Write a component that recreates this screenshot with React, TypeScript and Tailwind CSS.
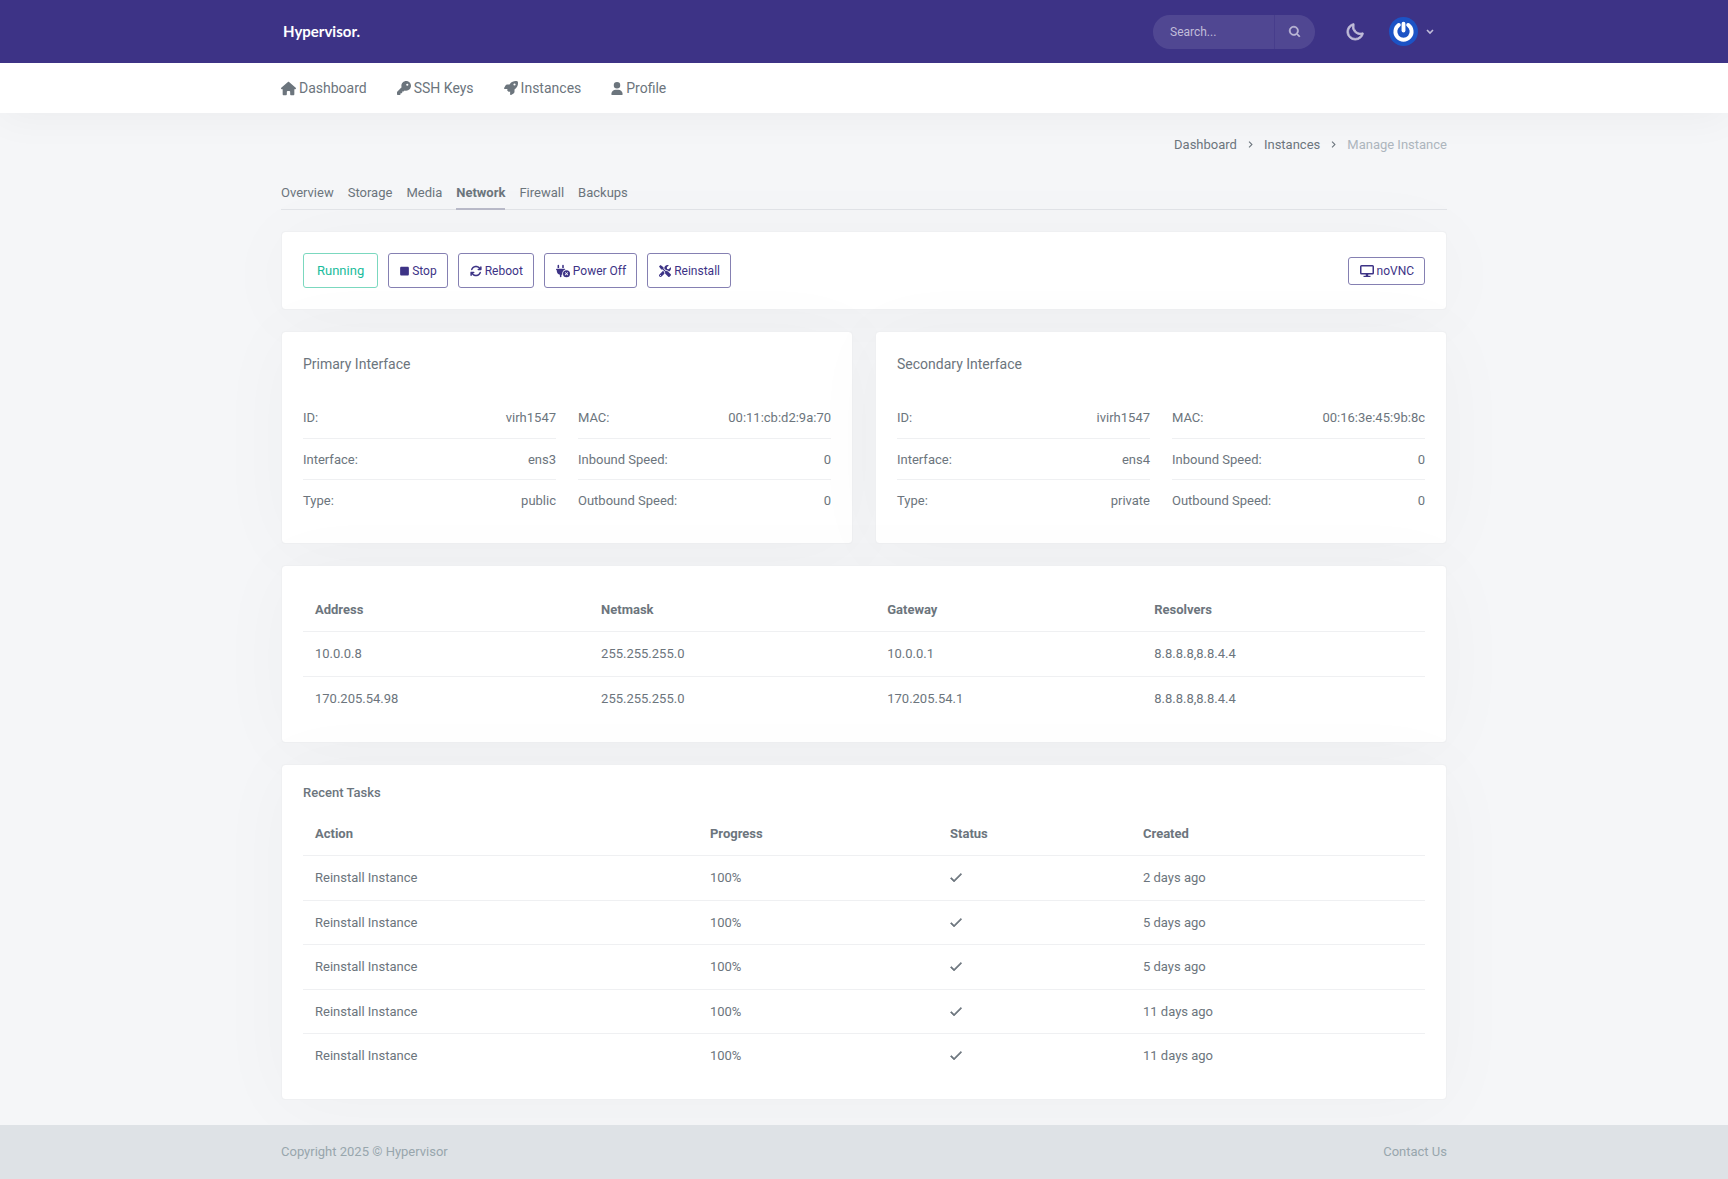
import type { ReactNode } from 'react'
import { BiMoon, BiSearch } from 'react-icons/bi'
import { FaArrowsRotate, FaHouse, FaKey, FaPlugCircleXmark, FaRocket, FaSquare, FaUser } from 'react-icons/fa6'
import { FaTools } from 'react-icons/fa'
import { MdChevronRight } from 'react-icons/md'

interface InterfaceInfo {
  title: string
  left: [string, string][]
  right: [string, string][]
}

const navItems = [
  { label: 'Dashboard', icon: <FaHouse className="size-[15px]" /> },
  { label: 'SSH Keys', icon: <FaKey className="size-[14px]" /> },
  { label: 'Instances', icon: <FaRocket className="size-[14px]" /> },
  { label: 'Profile', icon: <FaUser className="h-[13px] w-3" /> },
]

const tabs = ['Overview', 'Storage', 'Media', 'Network', 'Firewall', 'Backups']

const interfaces: InterfaceInfo[] = [
  {
    title: 'Primary Interface',
    left: [['ID:', 'virh1547'], ['Interface:', 'ens3'], ['Type:', 'public']],
    right: [['MAC:', '00:11:cb:d2:9a:70'], ['Inbound Speed:', '0'], ['Outbound Speed:', '0']],
  },
  {
    title: 'Secondary Interface',
    left: [['ID:', 'ivirh1547'], ['Interface:', 'ens4'], ['Type:', 'private']],
    right: [['MAC:', '00:16:3e:45:9b:8c'], ['Inbound Speed:', '0'], ['Outbound Speed:', '0']],
  },
]

const addresses = [
  ['10.0.0.8', '255.255.255.0', '10.0.0.1', '8.8.8.8,8.8.4.4'],
  ['170.205.54.98', '255.255.255.0', '170.205.54.1', '8.8.8.8,8.8.4.4'],
]

const tasks = ['2 days ago', '5 days ago', '5 days ago', '11 days ago', '11 days ago']

function Container({ children, className = '' }: { children: ReactNode; className?: string }) {
  return <div className={`mx-auto w-full max-w-[1190px] px-3 ${className}`}>{children}</div>
}

function Card({ children, className = '' }: { children: ReactNode; className?: string }) {
  return (
    <section className={`rounded border border-[#eff0f2] bg-white bg-clip-padding shadow-[0_5px_80px_0_rgba(3,2,8,0.03)] ${className}`}>
      {children}
    </section>
  )
}

function ActionButton({ icon, label, className = 'h-[35px] pr-[10px] pl-[11px]' }: { icon: ReactNode; label: string; className?: string }) {
  return (
    <button type="button" className={`flex items-center gap-[3px] rounded-[3px] border border-[#8580b2] text-xs text-[#3d3386] hover:bg-[#3d3386]/10 ${className}`}>
      {icon}
      {label}
    </button>
  )
}

function CheckIcon() {
  return (
    <svg viewBox="3 5 18 14" className="h-[9px] w-3" fill="currentColor" stroke="currentColor" strokeWidth={1} role="img" aria-label="Complete">
      <path d="M9 16.17 4.83 12l-1.42 1.41L9 19 21 7l-1.41-1.41z" />
    </svg>
  )
}

function DisplayIcon() {
  return (
    <svg viewBox="0 0 14 12" className="h-3 w-[14px]" fill="none" stroke="currentColor" aria-hidden>
      <rect x="0.75" y="0.75" width="12.5" height="8" rx="0.8" strokeWidth="1.5" />
      <path d="M7 9v2" strokeWidth="2.5" />
      <path d="M3.5 11.4h7" strokeWidth="1.2" />
    </svg>
  )
}

function InfoList({ rows }: { rows: [string, string][] }) {
  return (
    <dl className="flex-1 divide-y divide-[#eff0f2]">
      {rows.map(([name, value]) => (
        <div key={name} className="flex justify-between pt-[11px] pb-[10px]">
          <dt>{name}</dt>
          <dd>{value}</dd>
        </div>
      ))}
    </dl>
  )
}

function DataTable({ columns, rows }: { columns: { label: string; width: string }[]; rows: ReactNode[][] }) {
  return (
    <table className="w-full table-fixed text-left">
      <thead>
        <tr className="border-b border-[#eff0f2]">
          {columns.map((column) => (
            <th key={column.label} scope="col" className={`p-3 font-bold ${column.width}`}>{column.label}</th>
          ))}
        </tr>
      </thead>
      <tbody className="divide-y divide-[#eff0f2]">
        {rows.map((row, i) => (
          <tr key={i}>
            {row.map((cell, j) => (
              <td key={j} className="p-3">{cell}</td>
            ))}
          </tr>
        ))}
      </tbody>
    </table>
  )
}

export default function App() {
  return (
    <div className="flex min-h-screen flex-col bg-[#f5f6f8] font-[Roboto,sans-serif] text-[13px] leading-normal text-[#6c757d]">
      <header className="relative z-10 bg-[#3d3386]">
        <Container className="flex h-[63px] items-center justify-between">
          <a href="#" className="pl-[2px] font-[Lato,sans-serif] text-[15px] font-bold text-white">Hypervisor.</a>
          <div className="flex items-center pr-[10px]">
            <form role="search" className="flex h-[34px] w-[162px] overflow-hidden rounded-full bg-white/10 text-[#c1bdd9]">
              <input
                type="search"
                aria-label="Search"
                placeholder="Search..."
                className="min-w-0 flex-1 bg-transparent pl-[17px] text-xs outline-none placeholder:text-[#c1bdd9]"
              />
              <button type="submit" aria-label="Submit search" className="flex w-[41px] items-center justify-center border-l border-[#473d8c]">
                <BiSearch className="size-[14px]" strokeWidth={1} />
              </button>
            </form>
            <button type="button" aria-label="Toggle dark mode" className="ml-[30px] text-[#c1bdd9]">
              <BiMoon className="size-5" strokeWidth={1} />
            </button>
            <button type="button" aria-label="Account menu" className="ml-6 flex items-center gap-[5px] text-[#c1bdd9]">
              <svg viewBox="0 0 30 30" className="size-[29px]" aria-hidden>
                <circle cx="15" cy="15" r="15" fill="#1c53c5" />
                <path d="M10.2 8.2a8.4 8.4 0 1 0 9.6 0" fill="none" stroke="#fff" strokeWidth="4" strokeLinecap="round" />
                <path d="M15 7v7" stroke="#fff" strokeWidth="4" strokeLinecap="round" />
              </svg>
              <svg viewBox="0 0 14 14" className="size-[14px]" fill="none" stroke="currentColor" strokeWidth="1.6" aria-hidden>
                <path d="m4 5 3 3 3-3" />
              </svg>
            </button>
          </div>
        </Container>
      </header>

      <nav className="bg-white shadow-[0_5px_40px_0_rgba(3,2,8,0.045)]">
        <Container className="flex h-[50px] items-center gap-[30px] text-sm">
          {navItems.map((item) => (
            <a key={item.label} href="#" className="flex items-center gap-[3px]">
              {item.icon}
              {item.label}
            </a>
          ))}
        </Container>
      </nav>

      <main className="flex-1 pb-[25px]">
        <Container>
          <nav aria-label="Breadcrumb" className="flex items-center justify-end gap-[7px] pt-[22px]">
            <a href="#">Dashboard</a>
            <MdChevronRight className="size-[13px]" />
            <a href="#">Instances</a>
            <MdChevronRight className="size-[13px]" />
            <span className="text-[#adb5bd]">Manage Instance</span>
          </nav>

          <div className="mt-7 flex gap-[14px] border-b border-[#e2e4e8]">
            {tabs.map((tab) => (
              <a
                key={tab}
                href="#"
                className={tab === 'Network' ? '-mb-px border-b-2 border-[#b9bac9] pb-[6px] font-bold' : 'pb-[6px]'}
              >
                {tab}
              </a>
            ))}
          </div>

          <div className="mt-[21px] flex flex-col gap-[21px]">
            <Card className="flex items-center justify-between p-[21px]">
              <div className="flex gap-[10px]">
                <button type="button" className="h-[35px] rounded-[3px] border border-[#7bd8bf] px-[13px] text-[#1abc9c]">Running</button>
                <ActionButton icon={<FaSquare className="h-[10px] w-[9px]" />} label="Stop" />
                <ActionButton icon={<FaArrowsRotate className="size-3" />} label="Reboot" />
                <ActionButton icon={<FaPlugCircleXmark className="size-[14px]" />} label="Power Off" />
                <ActionButton icon={<FaTools className="size-3" />} label="Reinstall" />
              </div>
              <ActionButton icon={<DisplayIcon />} label="noVNC" className="h-7 pr-[10px] pl-[11px]" />
            </Card>

            <div className="grid grid-cols-2 gap-[22px]">
              {interfaces.map((item) => (
                <Card key={item.title} className="px-[21px] py-[22px]">
                  <h2 className="text-sm">{item.title}</h2>
                  <div className="mt-[23px] flex gap-[22px]">
                    <InfoList rows={item.left} />
                    <InfoList rows={item.right} />
                  </div>
                </Card>
              ))}
            </div>

            <Card className="px-[21px] py-[22px]">
              <DataTable
                columns={[
                  { label: 'Address', width: 'w-[25.5%]' },
                  { label: 'Netmask', width: 'w-[25.5%]' },
                  { label: 'Gateway', width: 'w-[23.8%]' },
                  { label: 'Resolvers', width: '' },
                ]}
                rows={addresses}
              />
            </Card>

            <Card className="px-[21px] pt-[18px] pb-[21px]">
              <h2 className="mb-[9px] font-medium">Recent Tasks</h2>
              <DataTable
                columns={[
                  { label: 'Action', width: 'w-[35.2%]' },
                  { label: 'Progress', width: 'w-[21.4%]' },
                  { label: 'Status', width: 'w-[17.2%]' },
                  { label: 'Created', width: '' },
                ]}
                rows={tasks.map((created) => ['Reinstall Instance', '100%', <CheckIcon key="status" />, created])}
              />
            </Card>
          </div>
        </Container>
      </main>

      <footer className="bg-[#dee2e6] text-[#98a6ad]">
        <Container className="flex h-[54px] items-center justify-between">
          <p>Copyright 2025 © Hypervisor</p>
          <a href="#">Contact Us</a>
        </Container>
      </footer>
    </div>
  )
}
